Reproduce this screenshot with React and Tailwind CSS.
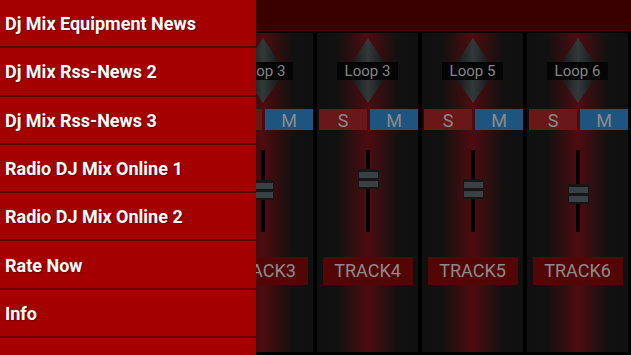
import React from "react";

const tracks = [
  { loop: "Loop 3", name: "TRACK3", knob: 30 },
  { loop: "Loop 3", name: "TRACK4", knob: 19 },
  { loop: "Loop 5", name: "TRACK5", knob: 29 },
  { loop: "Loop 6", name: "TRACK6", knob: 34 },
];

const menu = [
  "Dj Mix Equipment News",
  "Dj Mix Rss-News 2",
  "Dj Mix Rss-News 3",
  "Radio DJ Mix Online 1",
  "Radio DJ Mix Online 2",
  "Rate Now",
  "Info",
  "",
];

function Tri({ up, id }) {
  return (
    <svg width="36" height="24" viewBox="0 0 36 24" className="block">
      <defs>
        <linearGradient id={id} x1="0" y1="0" x2="1" y2="0">
          <stop offset="0" stopColor="#181818" />
          <stop offset="0.5" stopColor="#323939" />
          <stop offset="1" stopColor="#181818" />
        </linearGradient>
      </defs>
      {up ? (
        <polygon points="18,0 34,24 2,24" fill={`url(#${id})`} />
      ) : (
        <polygon points="2,0 34,0 18,23" fill={`url(#${id})`} />
      )}
    </svg>
  );
}

function Strip({ t, i }) {
  return (
    <div className="w-[101px] h-[319px] shrink-0 flex flex-col items-center bg-[linear-gradient(to_right,#101010_0%,#111111_20%,#4e0c10_50%,#111111_80%,#101010_100%)]">
      <div className="mt-[5px] flex flex-col items-center">
        <Tri up id={`u${i}`} />
        <div className="h-[18px] w-[61px] bg-[#050505] flex items-center justify-center text-[15px] leading-none text-[#858585]">
          {t.loop}
        </div>
        <Tri id={`d${i}`} />
      </div>
      <div className="mt-[5px] w-full flex gap-[3px] pl-[2px] h-[21px] text-[18px] leading-none text-[#8a8a8a]">
        <div className="w-[48px] bg-[#6a1717] flex items-end justify-center">S</div>
        <div className="flex-1 bg-[#1d5580] flex items-end justify-center">M</div>
      </div>
      <div className="mt-[20px] relative w-[4px] h-[82px] bg-black">
        <div
          className="absolute left-[-8px] w-[21px] h-[20px] bg-[#151717] flex flex-col justify-center gap-[3px] px-[1px]"
          style={{ top: t.knob }}
        >
          <div className="h-[6px] bg-[#3a4144]" />
          <div className="h-[6px] bg-[#3a4144]" />
        </div>
      </div>
      <div className="mt-[25px] w-[90px] h-[28px] bg-[#530606] flex items-center justify-center text-[18px] leading-none text-[#8c8c8c]">
        {t.name}
      </div>
    </div>
  );
}

export default function App() {
  return (
    <div className="relative w-[631px] h-[355px] bg-black overflow-hidden font-['Roboto',sans-serif]">
      <div className="h-[31px] bg-[#3a0000]" />
      <div className="mt-[2px] flex gap-[4px] pl-[212px]">
        {tracks.map((t, i) => (
          <Strip key={i} t={t} i={i} />
        ))}
      </div>
      <div className="absolute left-0 top-0 w-[256px] h-[355px] bg-[#a50000] overflow-hidden">
        {menu.map((m, i) => (
          <div
            key={i}
            className="h-[48.3px] box-border border-b-[2px] border-[#5c0000] flex items-center pl-[5px] pt-[2px] text-[#fbfbfb] text-[18px] font-bold leading-none whitespace-nowrap [text-shadow:1px_1px_1px_rgba(60,0,0,0.6)]"
          >
            {m}
          </div>
        ))}
      </div>
    </div>
  );
}
